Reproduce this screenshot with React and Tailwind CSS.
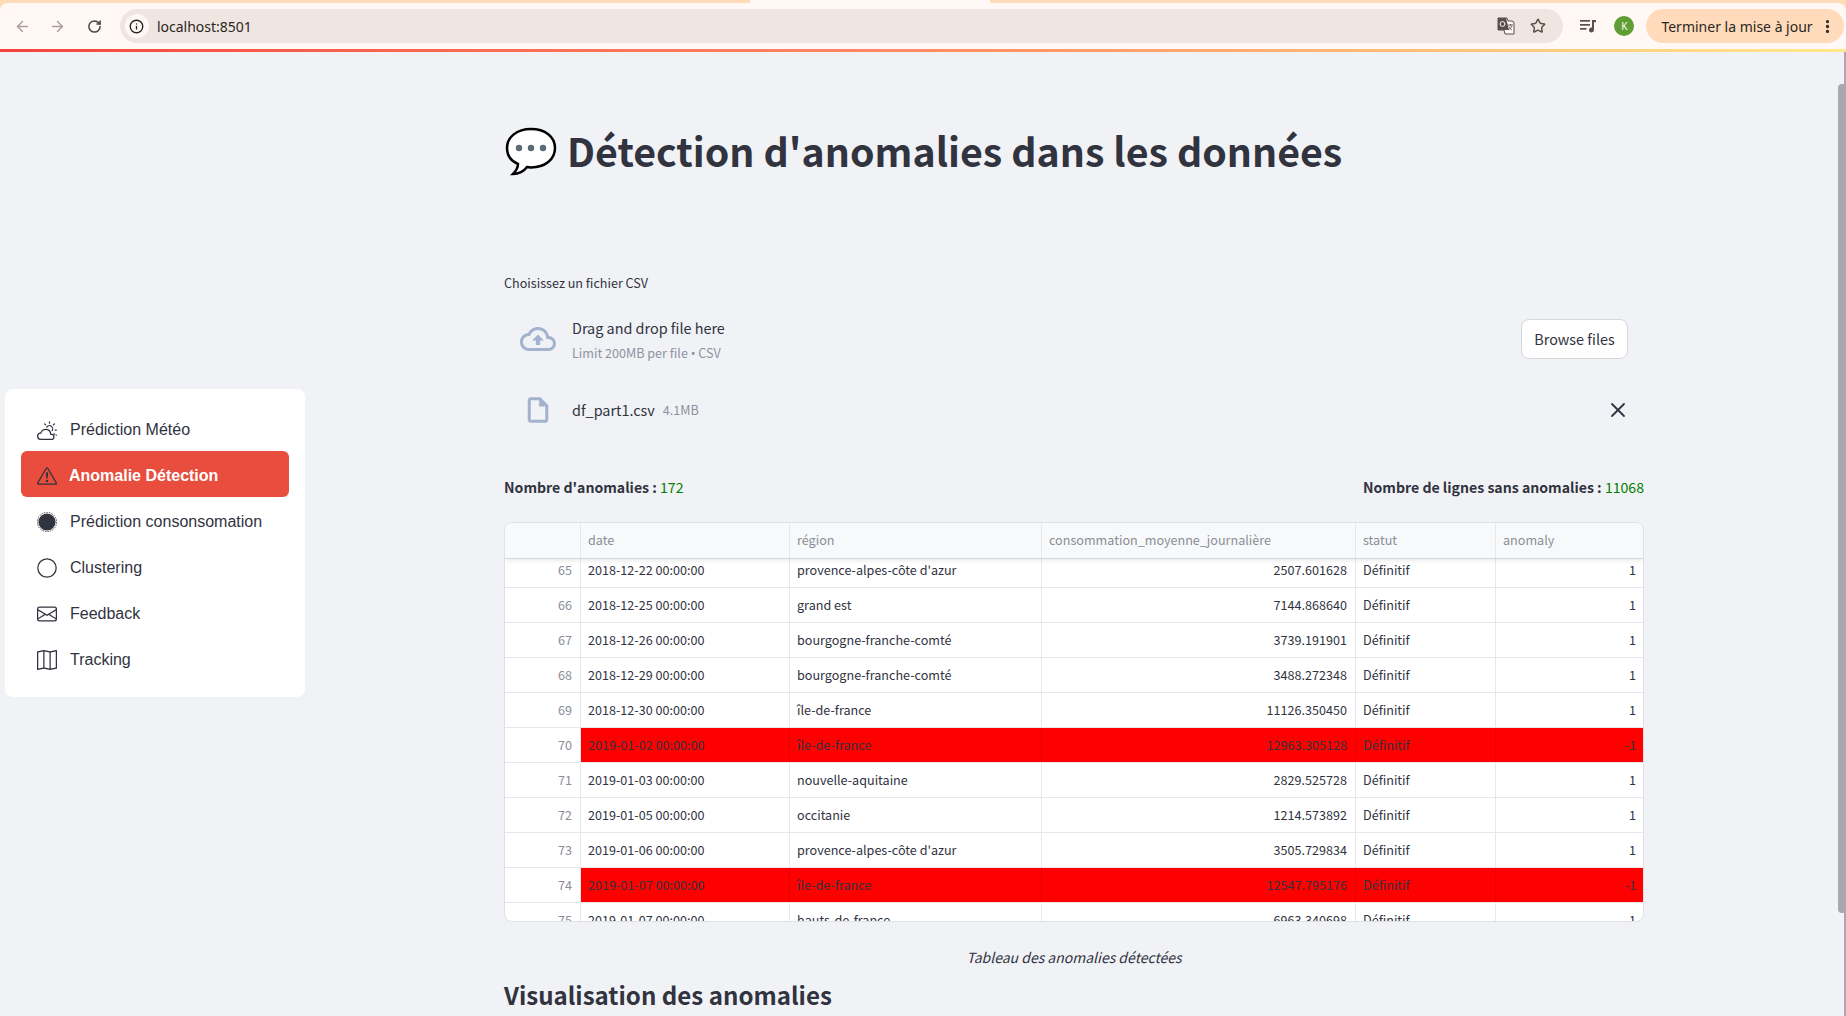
import { ArrowLeft, ArrowRight, RotateCw, Info, Star, MoreVertical, X } from 'lucide-react';

const sourceSans = { fontFamily: '"Noto Sans CJK SC", "Noto Sans", sans-serif' };

const rows = [
  { id: 65, date: '2018-12-22 00:00:00', region: "provence-alpes-côte d'azur", value: '2507.601628', anomaly: 1 },
  { id: 66, date: '2018-12-25 00:00:00', region: 'grand est', value: '7144.868640', anomaly: 1 },
  { id: 67, date: '2018-12-26 00:00:00', region: 'bourgogne-franche-comté', value: '3739.191901', anomaly: 1 },
  { id: 68, date: '2018-12-29 00:00:00', region: 'bourgogne-franche-comté', value: '3488.272348', anomaly: 1 },
  { id: 69, date: '2018-12-30 00:00:00', region: 'île-de-france', value: '11126.350450', anomaly: 1 },
  { id: 70, date: '2019-01-02 00:00:00', region: 'île-de-france', value: '12963.305128', anomaly: -1 },
  { id: 71, date: '2019-01-03 00:00:00', region: 'nouvelle-aquitaine', value: '2829.525728', anomaly: 1 },
  { id: 72, date: '2019-01-05 00:00:00', region: 'occitanie', value: '1214.573892', anomaly: 1 },
  { id: 73, date: '2019-01-06 00:00:00', region: "provence-alpes-côte d'azur", value: '3505.729834', anomaly: 1 },
  { id: 74, date: '2019-01-07 00:00:00', region: 'île-de-france', value: '12547.795176', anomaly: -1 },
  { id: 75, date: '2019-01-07 00:00:00', region: 'hauts-de-france', value: '6963.340698', anomaly: 1 },
];

const CloudSun = () => (
  <svg viewBox="0 0 16 16" className="h-5 w-5" fill="currentColor">
    <path d="M7 8a3.5 3.5 0 0 1 3.5 3.555.5.5 0 0 0 .624.492A1.503 1.503 0 0 1 13 13.5a1.5 1.5 0 0 1-1.5 1.5H3a2 2 0 1 1 .1-3.998.5.5 0 0 0 .51-.375A3.502 3.502 0 0 1 7 8zm4.473 3a4.5 4.5 0 0 0-8.72-.99A3 3 0 0 0 3 16h8.5a2.5 2.5 0 0 0 0-5h-.027z" />
    <path d="M10.5 1.5a.5.5 0 0 0-1 0v1a.5.5 0 0 0 1 0v-1zm3.743 1.964a.5.5 0 1 0-.707-.707l-.708.707a.5.5 0 0 0 .708.708l.707-.708zm-7.779-.707a.5.5 0 0 0-.707.707l.707.708a.5.5 0 1 0 .708-.708l-.708-.707zm1.734 3.374a2 2 0 1 1 3.296 2.198c.199.281.372.582.516.898a3 3 0 1 0-4.84-3.225c.352.011.696.055 1.028.129zm4.556 4.352.349.228.152-.001A1.5 1.5 0 0 1 15 12.5h.5a.5.5 0 0 0 0-1h-1.379l-.367.983zM15.5 7.5h-1a.5.5 0 0 0 0 1h1a.5.5 0 0 0 0-1z" />
  </svg>
);

const Warning = () => (
  <svg viewBox="0 0 16 16" className="h-5 w-5" fill="currentColor">
    <path d="M7.938 2.016A.13.13 0 0 1 8.002 2a.13.13 0 0 1 .063.016.146.146 0 0 1 .054.057l6.857 11.667c.036.06.035.124.002.183a.163.163 0 0 1-.054.06.116.116 0 0 1-.066.017H1.146a.115.115 0 0 1-.066-.017.163.163 0 0 1-.054-.06.176.176 0 0 1 .002-.183L7.884 2.073a.147.147 0 0 1 .054-.057zm1.044-.45a1.13 1.13 0 0 0-1.96 0L.165 13.233c-.457.778.091 1.767.98 1.767h13.713c.889 0 1.438-.99.98-1.767L8.982 1.566z" />
    <path d="M7.002 12a1 1 0 1 1 2 0 1 1 0 0 1-2 0zM7.1 5.995a.905.905 0 1 1 1.8 0l-.35 3.507a.552.552 0 0 1-1.1 0L7.1 5.995z" />
  </svg>
);

const DashedDisc = () => (
  <svg viewBox="0 0 20 20" className="h-5 w-5">
    <circle cx="10" cy="10" r="9.6" fill="none" stroke="currentColor" strokeWidth="0.8" strokeDasharray="1.6 1" />
    <circle cx="10" cy="10" r="8.6" fill="currentColor" />
  </svg>
);

const Circle = () => (
  <svg viewBox="0 0 20 20" className="h-5 w-5" fill="none" stroke="currentColor" strokeWidth="1.25">
    <circle cx="10" cy="10" r="9.2" />
  </svg>
);

const Envelope = () => (
  <svg viewBox="0 0 16 16" className="h-5 w-5" fill="currentColor">
    <path d="M0 4a2 2 0 0 1 2-2h12a2 2 0 0 1 2 2v8a2 2 0 0 1-2 2H2a2 2 0 0 1-2-2V4zm2-1a1 1 0 0 0-1 1v.217l7 4.2 7-4.2V4a1 1 0 0 0-1-1H2zm13 2.383-4.708 2.825L15 11.105V5.383zm-.034 6.876-5.64-3.471L8 9.583l-1.326-.795-5.64 3.47A1 1 0 0 0 2 13h12a1 1 0 0 0 .966-.741zM1 11.105l4.708-2.897L1 5.383v5.722z" />
  </svg>
);

const MapIcon = () => (
  <svg viewBox="0 0 16 16" className="h-5 w-5" fill="currentColor">
    <path fillRule="evenodd" d="M15.817.113A.5.5 0 0 1 16 .5v14a.5.5 0 0 1-.402.49l-5 1a.502.502 0 0 1-.196 0L5.5 15.01l-4.902.98A.5.5 0 0 1 0 15.5v-14a.5.5 0 0 1 .402-.49l5-1a.5.5 0 0 1 .196 0L10.5.99l4.902-.98a.5.5 0 0 1 .415.103zM10 1.91l-4-.8v12.98l4 .8V1.91zm1 12.98 4-.8V1.11l-4 .8v12.98zm-6-.8V1.11l-4 .8v12.98l4-.8z" />
  </svg>
);

const navItems = [
  { label: 'Prédiction Météo', icon: <CloudSun /> },
  { label: 'Anomalie Détection', icon: <Warning />, active: true },
  { label: 'Prédiction consonsomation', icon: <DashedDisc /> },
  { label: 'Clustering', icon: <Circle /> },
  { label: 'Feedback', icon: <Envelope /> },
  { label: 'Tracking', icon: <MapIcon /> },
];

const MediaIcon = () => (
  <svg viewBox="0 0 17 14" className="ml-[17px] h-[14px] w-[17px] text-[#5a504b]" fill="currentColor">
    <rect x="0" y="1" width="10" height="1.7" />
    <rect x="0" y="5" width="10" height="1.7" />
    <rect x="0" y="9" width="6.500" height="1.7" />
    <path d="M12 1h5v2.200h-3V11a2.500 2.500 0 1 1-2-2.450z" />
  </svg>
);

const BrowserBar = () => (
  <div className="bg-[#ffdcb9]">
    <div className="flex">
      <div className="h-[3px] w-[750px] rounded-br-md bg-[#ffdcb9]" />
      <div className="h-[3px] w-[240px] bg-[#fff8f5]" />
      <div className="h-[3px] flex-1 rounded-bl-md bg-[#ffdcb9]" />
    </div>
    <div className="flex h-[46px] items-center rounded-t-lg bg-[#fff8f5] pl-[14px] pr-[2px]" style={{ fontFamily: '"Noto Sans", sans-serif' }}>
      <ArrowLeft className="h-[17px] w-[17px] text-[#a89f9b]" strokeWidth={2} />
      <ArrowRight className="ml-[18px] h-[17px] w-[17px] text-[#a89f9b]" strokeWidth={2} />
      <RotateCw className="ml-[21px] h-[15px] w-[15px] text-[#4d4540]" strokeWidth={2.4} />
      <div className="ml-[18px] flex h-[34px] w-[1446px] items-center rounded-full bg-[#efe6e1] pl-[5px] pr-[17px]">
        <div className="flex h-6 w-6 items-center justify-center rounded-full bg-[#fff8f5]">
          <Info className="h-[15px] w-[15px] text-[#2b2622]" strokeWidth={2.2} />
        </div>
        <span className="ml-2 flex-1 text-[14px] text-[#2b2622]">localhost:8501</span>
        <svg viewBox="0 0 18 18" className="mr-[15px] h-[18px] w-[18px]">
          <path d="M1 1h9l1 3h4a2 2 0 0 1 2 2v11H8l-1-4H1z" fill="#fff8f5" stroke="#5a504b" strokeWidth="1" />
          <path d="M1 1h8l3 12H1z" fill="#5a504b" />
          <circle cx="5.5" cy="7" r="2.4" fill="none" stroke="#fff8f5" strokeWidth="1" />
          <path d="M11 8h5M13.5 7v1.5M15 8.500c-.5 2-2 3.500-3 4M12 9.500c.5 1.500 2 3 3 3.500" fill="none" stroke="#5a504b" strokeWidth="0.9" />
        </svg>
        <Star className="h-[16px] w-[16px] text-[#5a504b]" strokeWidth={2.2} />
      </div>
      <MediaIcon />
      <div className="ml-[18px] flex h-5 w-5 items-center justify-center rounded-full bg-[#5f9e33] text-[10px] text-white">K</div>
      <div className="ml-[12px] flex h-[34px] w-[198px] items-center rounded-full bg-[#ffdbbb] pl-[15px] text-[14px] text-[#2b2622]">
        <span className="flex-1 whitespace-nowrap">Terminer la mise à jour</span>
        <MoreVertical className="mr-[8px] h-[17px] w-[17px]" strokeWidth={2.6} />
      </div>
    </div>
    <div className="h-[3px] bg-gradient-to-r from-[#f4433c] via-[#ff8a65] to-[#ffe98a]" />
  </div>
);

const Sidebar = () => (
  <div className="ml-[5px] mt-[337px] h-[308px] w-[300px] shrink-0 rounded-lg bg-white p-4" style={{ fontFamily: '"Liberation Sans", sans-serif' }}>
    {navItems.map((item) => (
      <div
        key={item.label}
        className={`flex h-[46px] items-center gap-[13px] rounded-md pl-4 pt-[3px] text-base text-[#31333f] ${item.active ? 'bg-[#e84d3d]' : ''}`}
      >
        {item.icon}
        <span className={item.active ? '-ml-px font-bold text-white' : ''}>{item.label}</span>
      </div>
    ))}
  </div>
);

const Row = ({ row }) => {
  const bad = row.anomaly === -1;
  const cell = `flex items-center border-r pl-[7px] pr-2 ${bad ? 'border-[#e60000] bg-[#ff0000]' : 'border-[#e6e8ec]'}`;
  return (
    <div className="grid h-[35px] grid-cols-[76px_209px_252px_314px_140px_148px] border-b border-[#e6e8ec] text-[12.6px] text-[#31333f]">
      <div className="flex items-center justify-end border-r border-[#e6e8ec] px-2 text-[#8a8d96]">{row.id}</div>
      <div className={cell}>{row.date}</div>
      <div className={cell}>{row.region}</div>
      <div className={`${cell} justify-end`}>{row.value}</div>
      <div className={cell}>Définitif</div>
      <div className={`${cell} justify-end border-r-0`}>{row.anomaly}</div>
    </div>
  );
};

const Table = () => (
  <div className="mt-[22px] h-[400px] overflow-hidden rounded-lg border border-[#dfe1e6] bg-white">
    <div className="relative z-10 grid h-[36px] grid-cols-[76px_209px_252px_314px_140px_148px] border-b border-[#d5d7dc] bg-[#f8f9fb] text-[12.6px] text-[#8a8d96] shadow-[0_2px_4px_rgba(0,0,0,0.08)]">
      {['', 'date', 'région', 'consommation_moyenne_journalière', 'statut', 'anomaly'].map((title, i) => (
        <div key={i} className="flex items-center border-r border-[#e6e8ec] pl-[7px] pr-2 last:border-r-0">{title}</div>
      ))}
    </div>
    <div className="-mt-[6px]">
      {rows.map((row) => <Row key={row.id} row={row} />)}
    </div>
  </div>
);

const Main = () => (
  <div className="ml-[199px] w-[1140px] shrink-0" style={sourceSans}>
    <div className="mt-[68px] flex h-[60px] items-center text-[#31333f]">
      <svg viewBox="0 0 52 50" className="mt-[3px] h-[50px] w-[54px] shrink-0">
        <path d="M26 2C12 2 2 10 2 21c0 7 4 13 11 16 0 3-2 7-5 10 6 0 11-3 14-7 1 0 3 .5 4 .5 14 0 24-8 24-19.500S40 2 26 2z" fill="#fff" stroke="#000" strokeWidth="2.500" />
        <circle cx="14" cy="21" r="3.200" fill="#5b6b73" />
        <circle cx="26" cy="21" r="3.200" fill="#5b6b73" />
        <circle cx="38" cy="21" r="3.200" fill="#5b6b73" />
      </svg>
      <h1 className="ml-[9px] whitespace-nowrap text-[39.3px] font-bold leading-none">Détection d'anomalies dans les données</h1>
    </div>

    <div className="mt-[93px] text-[12.6px] leading-5 text-[#31333f]">Choisissez un fichier CSV</div>

    <div className="mt-[16px] flex h-[60px] items-center pl-4 pr-4 text-[#31333f]">
      <svg viewBox="0 0 24 24" className="h-[36px] w-[36px] text-[#a3b2cd]" fill="currentColor">
        <path d="M19.350 10.040C18.670 6.590 15.640 4 12 4 9.110 4 6.600 5.640 5.350 8.040 2.340 8.360 0 10.910 0 14c0 3.310 2.690 6 6 6h13c2.760 0 5-2.240 5-5 0-2.640-2.050-4.780-4.650-4.960zM19 18H6c-2.210 0-4-1.790-4-4 0-2.050 1.530-3.760 3.560-3.970l1.070-.11.500-.95C8.080 7.140 9.940 6 12 6c2.620 0 4.880 1.860 5.390 4.430l.3 1.500 1.530.11c1.560.1 2.780 1.410 2.780 2.960 0 1.650-1.350 3-3 3zM8 13h2.550v3h2.900v-3H16l-4-4z" />
      </svg>
      <div className="ml-4 flex-1 pt-px">
        <div className="text-[14.4px] leading-6">Drag and drop file here</div>
        <div className="mt-[3px] text-[12.6px] leading-5 text-[#8f93a0]">
          Limit 200MB per file <span className="font-['Noto_Sans']">•</span> CSV
        </div>
      </div>
      <button className="flex h-10 w-[107px] items-center justify-center rounded-lg border border-[#d5d7dc] bg-white text-[14.4px] text-[#31333f]">Browse files</button>
    </div>

    <div className="mt-[19px] flex h-[44px] items-center pl-[19px] pr-[14px] text-[#31333f]">
      <svg viewBox="0 0 24 24" className="h-[30px] w-[30px] text-[#a3b2cd]" fill="currentColor" stroke="currentColor" strokeWidth="0.4">
        <path d="M14 2H6c-1.100 0-2 .9-2 2v16c0 1.100.9 2 2 2h12c1.100 0 2-.9 2-2V8l-6-6zm4 18H6V4h7v5h5v11z" />
      </svg>
      <span className="ml-[19px] text-[14.4px]">df_part1.csv</span>
      <span className="ml-2 flex-1 text-[12.6px] text-[#8f93a0]">4.1MB</span>
      <X className="h-6 w-6" strokeWidth={1.8} />
    </div>

    <div className="mt-[44px] flex h-6 items-center justify-between text-[14.1px] font-semibold text-[#31333f]">
      <p>Nombre d'anomalies : <span className="font-normal text-[#008000]">172</span></p>
      <p>Nombre de lignes sans anomalies : <span className="font-normal text-[#008000]">11068</span></p>
    </div>

    <Table />

    <p className="mt-[23px] text-center text-[14px] italic leading-6 text-[#31333f]">Tableau des anomalies détectées</p>
    <h2 className="mt-[6px] text-[24.1px] font-semibold leading-10 text-[#31333f]">Visualisation des anomalies</h2>
  </div>
);

export default function App() {
  return (
    <div className="relative flex h-[1016px] w-[1846px] flex-col overflow-hidden bg-[#f0f2f6]">
      <BrowserBar />
      <div className="flex min-h-0 flex-1">
        <Sidebar />
        <Main />
      </div>
      {/* page scrollbar: thin track line with the thumb over it */}
      <div className="absolute bottom-0 right-0 top-[52px] w-[2px] bg-[#a8a8ad]" />
      <div className="absolute bottom-[103px] right-0 top-[84px] w-2 rounded-l-sm bg-[#a8a8ad]" />
    </div>
  );
}
